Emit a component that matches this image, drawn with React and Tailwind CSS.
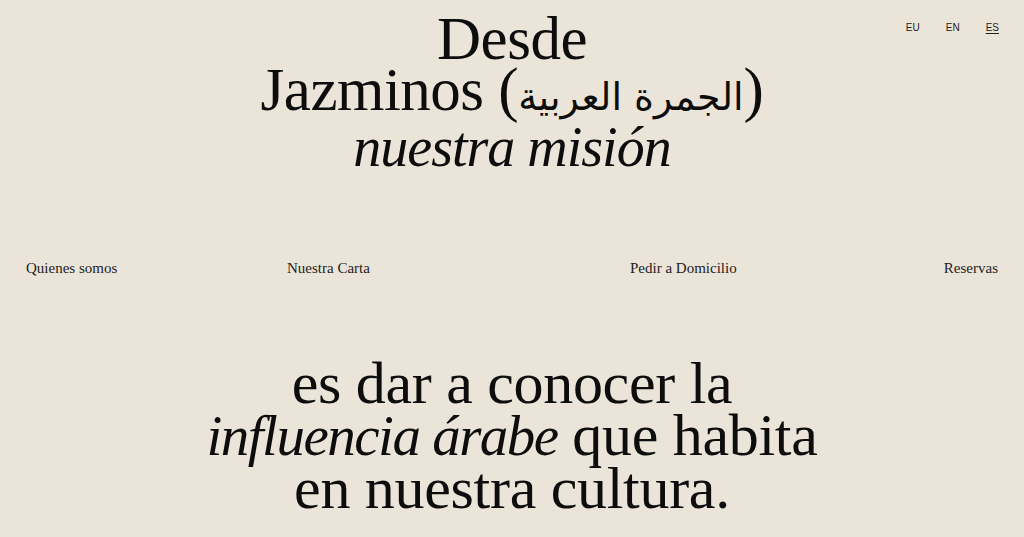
import React from 'react';

const navLinks = [
  { label: 'Quienes somos', width: 'w-[261px]' },
  { label: 'Nuestra Carta', width: 'w-[343px]' },
  { label: 'Pedir a Domicilio', width: 'flex-1' },
  { label: 'Reservas', width: '' },
];

const langs = [
  { code: 'EU', active: false },
  { code: 'EN', active: false },
  { code: 'ES', active: true },
];

const serif = { fontFamily: '"Liberation Serif", "DejaVu Serif", serif' };

export default function App() {
  return (
    <div className="w-[1024px] h-[537px] overflow-hidden bg-[#ebe5d9] text-[#0d0d0d] relative" style={serif}>
      {/* Language switcher */}
      <div className="absolute top-[20px] right-[25px] flex gap-[26px] text-[10px] font-['Liberation_Sans',sans-serif] text-[#222]">
        {langs.map((l) => (
          <span key={l.code} className={l.active ? 'underline underline-offset-2' : ''}>{l.code}</span>
        ))}
      </div>

      {/* Hero title */}
      <header className="pt-[13px] text-center text-[61px] leading-[51px] tracking-[-0.5px]">
        <div>Desde</div>
        <div>Jazminos (<span dir="rtl" className="font-['DejaVu_Sans',serif] text-[38px]">الجمرة العربية</span>)</div>
        <div className="italic text-[56px] leading-[48px] tracking-[-1px]">nuestra misión</div>
      </header>

      {/* Nav */}
      <nav className="mt-[86px] px-[26px] flex items-center text-[15px] text-[#222]">
        {navLinks.map((n) => (
          <span key={n.label} className={n.width}>{n.label}</span>
        ))}
      </nav>

      {/* Mission */}
      <section className="mt-[77px] text-center text-[60px] leading-[52px] tracking-[-0.3px]">
        <p>es dar a conocer la</p>
        <p><span className="italic text-[57px] tracking-[-1.5px]">influencia árabe</span> que habita</p>
        <p>en nuestra cultura.</p>
      </section>
    </div>
  );
}
